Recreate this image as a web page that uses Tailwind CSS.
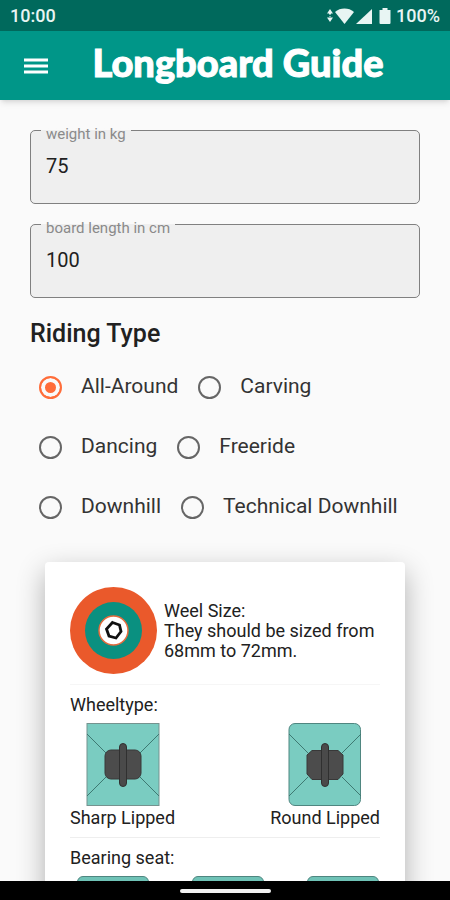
<!DOCTYPE html>
<html lang="en">
<head>
<meta charset="utf-8">
<meta name="viewport" content="width=device-width, initial-scale=1">
<title>Longboard Guide</title>
<script src="https://cdn.jsdelivr.net/npm/@tailwindcss/browser@4"></script>
</head>
<body class="flex h-screen flex-col overflow-hidden bg-[#fafafa] font-['Roboto','Liberation_Sans',sans-serif] text-[#212121]">

<!-- Status bar -->
<div class="flex h-[31px] shrink-0 items-center bg-[#00695c] px-[10px] text-lg font-medium text-[#e8f5f3]">
  <span class="grow">10:00</span>
  <svg class="mr-[5px] h-[18px] w-[64px]" viewBox="0 0 64 18" fill="currentColor" aria-hidden="true">
    <path d="M3 2 6 6.500H0zM3 15l3-4.500H0zM2 6h2v1.500H2zM2 9.500h2V11H2z"/>
    <path d="M8 5c5.300-4.600 13.700-4.600 19 0L17.500 17z"/>
    <path d="M45 2v15H29z"/>
    <path d="M55.500 1h5v2h3v13a1 1 0 0 1-1 1h-9a1 1 0 0 1-1-1V3h3z"/>
  </svg>
  <span>100%</span>
</div>

<!-- App bar -->
<header class="relative z-10 flex h-[69px] shrink-0 items-center bg-[#009688] px-6 text-white shadow-md">
  <button type="button" aria-label="Open menu" class="w-6">
    <svg class="h-[18px] w-6" viewBox="0 0 24 18" fill="currentColor" aria-hidden="true"><path d="M0 1.500h24v3H0zM0 7.500h24v3H0zM0 13.500h24v3H0z"/></svg>
  </button>
  <h1 class="grow pr-[18px] pb-2 pl-5 text-center font-['Lato',sans-serif] text-[38px] leading-10 font-black whitespace-nowrap [-webkit-text-stroke:1px_white]">Longboard Guide</h1>
</header>

<main class="min-h-0 flex-1 overflow-y-auto px-[30px] pt-[30px] [scrollbar-width:none]">
  <form>
    <div class="relative">
      <label for="weight" class="absolute -top-1 left-[11px] bg-linear-to-b from-[#fafafa] from-25% to-[#efefef] to-25% px-[5px] text-[15px] leading-4 text-[#8a8a8a]">weight in kg</label>
      <input id="weight" type="text" value="75" class="h-[74px] w-full rounded-[5px] border border-[#808080] bg-[#efefef] px-[15px] pb-0.5 text-xl">
    </div>
    <div class="relative mt-5">
      <label for="length" class="absolute -top-1 left-[11px] bg-linear-to-b from-[#fafafa] from-25% to-[#efefef] to-25% px-[5px] text-[15px] leading-4 text-[#8a8a8a]">board length in cm</label>
      <input id="length" type="text" value="100" class="h-[74px] w-full rounded-[5px] border border-[#808080] bg-[#efefef] px-[15px] pb-0.5 text-xl">
    </div>

    <fieldset class="mt-5">
      <legend class="text-[25px] leading-8 font-medium">Riding Type</legend>
      <div class="mt-[7px] flex flex-wrap gap-x-5 pl-[9px] text-[21px] text-[#333]">
        <label class="flex h-[60px] items-center gap-[19px]"><input type="radio" name="type" checked class="size-[23px] appearance-none rounded-full border-2 border-[#666] checked:border-[#ff6d3a] checked:bg-[#ff6d3a] checked:shadow-[inset_0_0_0_4px_#fafafa]">All-Around</label>
        <label class="flex h-[60px] items-center gap-[19px]"><input type="radio" name="type" class="size-[23px] appearance-none rounded-full border-2 border-[#666] checked:border-[#ff6d3a] checked:bg-[#ff6d3a] checked:shadow-[inset_0_0_0_4px_#fafafa]">Carving</label>
        <label class="flex h-[60px] items-center gap-[19px]"><input type="radio" name="type" class="size-[23px] appearance-none rounded-full border-2 border-[#666] checked:border-[#ff6d3a] checked:bg-[#ff6d3a] checked:shadow-[inset_0_0_0_4px_#fafafa]">Dancing</label>
        <label class="flex h-[60px] items-center gap-[19px]"><input type="radio" name="type" class="size-[23px] appearance-none rounded-full border-2 border-[#666] checked:border-[#ff6d3a] checked:bg-[#ff6d3a] checked:shadow-[inset_0_0_0_4px_#fafafa]">Freeride</label>
        <label class="flex h-[60px] items-center gap-[19px]"><input type="radio" name="type" class="size-[23px] appearance-none rounded-full border-2 border-[#666] checked:border-[#ff6d3a] checked:bg-[#ff6d3a] checked:shadow-[inset_0_0_0_4px_#fafafa]">Downhill</label>
        <label class="flex h-[60px] items-center gap-[19px]"><input type="radio" name="type" class="size-[23px] appearance-none rounded-full border-2 border-[#666] checked:border-[#ff6d3a] checked:bg-[#ff6d3a] checked:shadow-[inset_0_0_0_4px_#fafafa]">Technical Downhill</label>
      </div>
    </fieldset>
  </form>

  <section class="mx-[15px] mt-[25px] rounded-sm bg-white px-[25px] pt-[25px] pb-6 text-lg leading-5 shadow-[0_10px_28px_rgba(0,0,0,0.3)]">
    <div class="flex items-center gap-[7px] border-b border-[#f6f6f6] pb-[10px]">
      <svg class="size-[87px] shrink-0" viewBox="0 0 87 87" aria-hidden="true">
        <circle cx="43.500" cy="43.500" r="43.500" fill="#ea592b"/>
        <circle cx="43.500" cy="43.500" r="28.500" fill="#0a9080"/>
        <circle cx="43.500" cy="43.500" r="14.500" fill="#fff" stroke="#e56a3c" stroke-width="1.500"/>
        <path d="m42.500 35.500 7 2.500 1.500 6.500-5 6.500-7-2-2.500-7z" fill="#fff" stroke="#111" stroke-width="2.800"/>
      </svg>
      <p>Weel Size:<br>They should be sized from 68mm to 72mm.</p>
    </div>

    <div class="border-b border-[#eee] pt-[10px] pb-[9px]">
      <h2>Wheeltype:</h2>
      <div class="mt-2 flex justify-between">
        <figure class="flex flex-col items-center">
          <svg class="h-[83px] w-[74px]" viewBox="0 0 74 83" aria-hidden="true">
            <rect x="1" y=".5" width="72" height="82" fill="#7accc1" stroke="#75938f"/>
            <path d="M1 11 20 30M73 11 54 30M1 73l19-19M73 73 54 54" stroke="#3e7972" fill="none"/>
            <rect x="19" y="27" width="36" height="29" rx="6" fill="#4c4c4c" stroke="#383838"/>
            <rect x="33.500" y="20.500" width="7" height="43" rx="3.500" fill="#4a4a4a" stroke="#303030"/>
          </svg>
          <figcaption class="mt-0.5">Sharp Lipped</figcaption>
        </figure>
        <figure class="flex flex-col items-center">
          <svg class="h-[83px] w-[74px]" viewBox="0 0 74 83" aria-hidden="true">
            <rect x="1" y=".5" width="71.500" height="82" rx="6" fill="#7accc1" stroke="#4f8680"/>
            <path d="M1 11 20 30M73 11 54 30M1 73l19-19M73 73 54 54" stroke="#3e7972" fill="none"/>
            <path d="M24 27.500H50L55 32V51L50 56.500H24L19 51V32z" fill="#4c4c4c" stroke="#383838" stroke-linejoin="round"/>
            <rect x="33.500" y="20.500" width="7" height="43" rx="3.500" fill="#4a4a4a" stroke="#303030"/>
          </svg>
          <figcaption class="mt-0.5">Round Lipped</figcaption>
        </figure>
      </div>
    </div>

    <div class="pt-[10px]">
      <h2>Bearing seat:</h2>
      <div class="mt-2 flex justify-between pr-px pl-[7px]">
        <div class="h-[83px] w-[72px] rounded-md border border-[#4f8680] bg-[#6fc2b6]"></div>
        <div class="h-[83px] w-[72px] rounded-md border border-[#4f8680] bg-[#6fc2b6]"></div>
        <div class="h-[83px] w-[72px] rounded-md border border-[#4f8680] bg-[#6fc2b6]"></div>
      </div>
    </div>
  </section>
</main>

<!-- System navigation bar -->
<div class="flex h-[19px] shrink-0 items-center justify-center bg-black">
  <div class="h-1 w-[91px] rounded-full bg-[#f2f2f2]"></div>
</div>
</body>
</html>
